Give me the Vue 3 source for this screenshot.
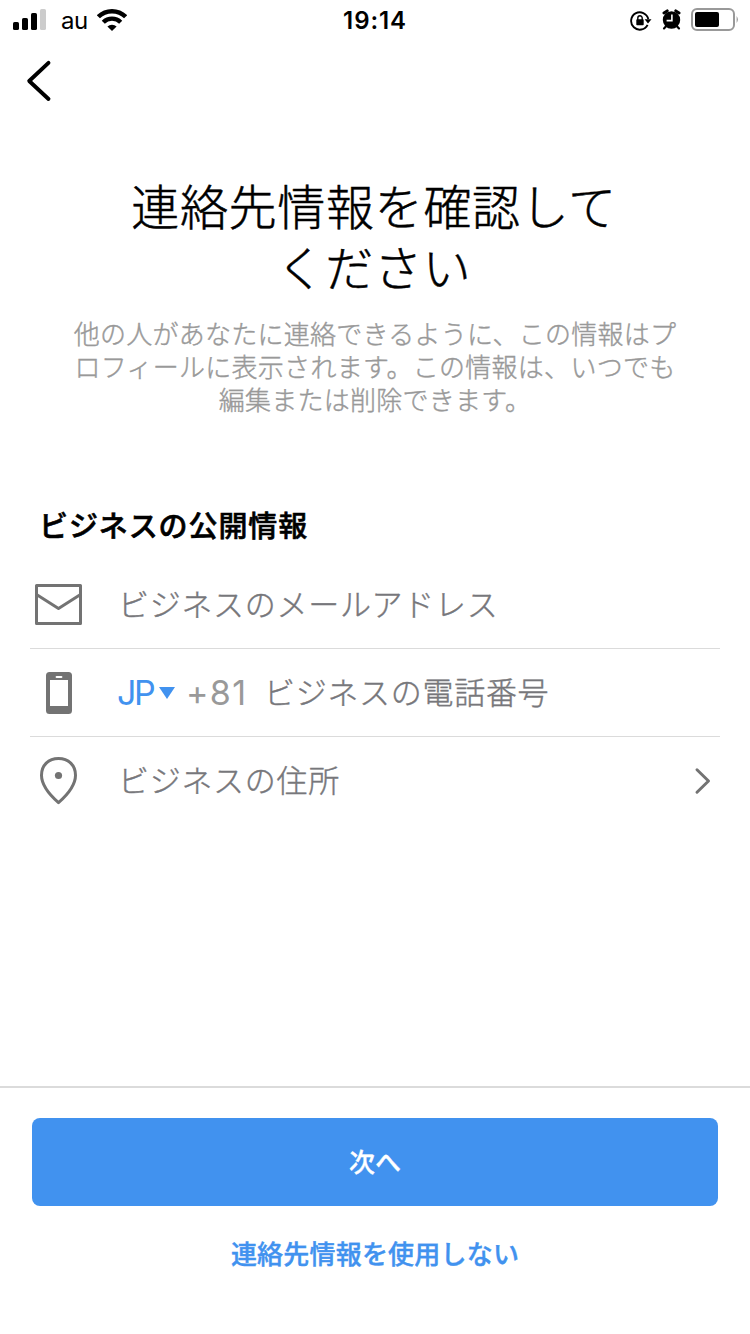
<script setup>
const titleLines = ['連絡先情報を確認して', 'ください']
const leadLines = [
  '他の人があなたに連絡できるように、この情報はプ',
  'ロフィールに表示されます。この情報は、いつでも',
  '編集または削除できます。',
]
</script>

<template>
  <div class="screen">
    <header class="status">
      <div class="status-left">
        <svg class="signal" width="34" height="22" viewBox="0 0 34 22">
          <rect x="0" y="13" width="6" height="8" rx="1.6" />
          <rect x="9" y="9" width="6" height="12" rx="1.6" />
          <rect x="18" y="4" width="6" height="17" rx="1.6" />
          <rect x="27" y="0" width="6" height="21" rx="1.6" fill="#ccc" />
        </svg>
        <span class="carrier">au</span>
        <svg class="wifi" width="30" height="22" viewBox="0 0 30 22">
          <g fill="none" stroke="#000" stroke-width="4.4">
            <path d="M1.4 7.8A19.4 19.4 0 0 1 28.6 7.8" />
            <path d="M6.3 13.2A12.4 12.4 0 0 1 23.7 13.2" />
          </g>
          <path d="M10.4 17.6A6.6 6.6 0 0 1 19.6 17.6L15 22Z" />
        </svg>
      </div>
      <span class="clock">19:14</span>
      <div class="status-right">
        <svg class="lock" width="22" height="22" viewBox="0 0 22 22">
          <path d="M17.6 14.9A8.7 8.7 0 1 1 18.3 9" fill="none" stroke="#000" stroke-width="1.9" />
          <path d="M14.6 9.2H21.5L18 13.6Z" />
          <rect x="6.3" y="9.3" width="7.4" height="5.9" rx=".8" />
          <path d="M7.8 10V8a2.2 2.2 0 0 1 4.4 0v2" fill="none" stroke="#000" stroke-width="1.4" />
        </svg>
        <svg class="alarm" width="20" height="21" viewBox="0 0 20 21">
          <circle cx="9.5" cy="11" r="8.7" />
          <path d="M2 4L5.2 1.9M17 4L13.8 1.9" stroke="#000" stroke-width="3" stroke-linecap="round" />
          <path d="M4.3 17L2 19.4M14.7 17L17 19.4" stroke="#000" stroke-width="2.2" stroke-linecap="round" />
          <path d="M9.9 5.6V11.6H4.6" fill="none" stroke="#fff" stroke-width="1.6" />
        </svg>
        <svg class="battery" width="48" height="24" viewBox="0 0 48 24">
          <rect x="1" y="1" width="42" height="21" rx="5" fill="none" stroke="#999" stroke-width="2" />
          <rect x="4" y="4" width="24" height="15" rx="2" />
          <path d="M45.6 8Q48.2 11.5 45.6 15Z" fill="#999" />
        </svg>
      </div>
    </header>

    <nav class="nav">
      <svg width="26" height="42" viewBox="0 0 26 42">
        <path d="M22.5 2.8L3.2 21L22.5 39" fill="none" stroke="#000" stroke-width="3.9" stroke-linecap="round" stroke-linejoin="round" />
      </svg>
    </nav>

    <main class="content">
      <h1 class="title"><span v-for="line in titleLines" :key="line">{{ line }}</span></h1>
      <p class="lead"><span v-for="line in leadLines" :key="line">{{ line }}</span></p>

      <h2 class="section">ビジネスの公開情報</h2>
      <div class="fields">
        <div class="field">
          <svg class="icon" width="58" height="50" viewBox="0 0 58 50">
            <g fill="none" stroke="#737373" stroke-width="3" stroke-linejoin="round">
              <rect x="6.5" y="5.5" width="44" height="38" />
              <path d="M6.5 14.5L28.5 28.5L50.5 14.5" />
            </g>
          </svg>
          <span class="hint">ビジネスのメールアドレス</span>
        </div>
        <div class="field">
          <svg class="icon" width="58" height="50" viewBox="0 0 58 50">
            <path fill="#737373" fill-rule="evenodd" d="M19.5 4H38.5a3.5 3.5 0 0 1 3.5 3.5V42.5a3.5 3.5 0 0 1-3.5 3.5H19.5a3.5 3.5 0 0 1-3.5-3.5V7.5a3.5 3.5 0 0 1 3.5-3.5ZM20 12V38H38V12ZM26.6 8a.7.7 0 0 0 0 2H31.4a.7.7 0 0 0 0-2Z" />
          </svg>
          <span class="country">JP</span>
          <svg class="caret" width="16" height="12" viewBox="0 0 16 12"><path d="M0 0H16L8 12Z" fill="#4192ef" /></svg>
          <span class="dial">+81</span>
          <span class="hint">ビジネスの電話番号</span>
        </div>
        <div class="field">
          <svg class="icon" width="58" height="50" viewBox="0 0 58 50">
            <path d="M28.5 46.6C21 40 11.5 30 11.5 19.2C11.5 9.3 18.5 2.5 28.5 2.5S45.5 9.3 45.5 19.2C45.5 30 36 40 28.5 46.6Z" fill="none" stroke="#737373" stroke-width="3" stroke-linejoin="round" />
            <circle cx="28.5" cy="19.5" r="3.6" fill="#737373" />
          </svg>
          <span class="hint">ビジネスの住所</span>
          <svg class="chevron" width="18" height="28" viewBox="0 0 18 28">
            <path d="M3 2.8L14.5 14L3 25.2" fill="none" stroke="#737373" stroke-width="3" stroke-linecap="round" stroke-linejoin="round" />
          </svg>
        </div>
      </div>
    </main>

    <footer class="actions">
      <button class="next">次へ</button>
      <a class="skip">連絡先情報を使用しない</a>
    </footer>
  </div>
</template>

<style>
body {
  background: #fff;
}
</style>

<style scoped>
.screen {
  display: flex;
  flex-direction: column;
  width: 750px;
  height: 1334px;
  overflow: hidden;
  background: #fff;
  color: #000;
  font-family: "Noto Sans CJK JP", sans-serif;
}
svg {
  display: block;
  flex: none;
}
.status {
  display: grid;
  grid-template-columns: 1fr auto 1fr;
  height: 40px;
  font-family: Inter, sans-serif;
}
.status-left,
.status-right {
  display: flex;
  align-items: flex-start;
}
.status-left {
  padding-left: 13px;
}
.signal {
  margin-top: 9px;
}
.carrier {
  margin: 6px 0 0 14px;
  width: 36px;
  font-size: 24px;
  line-height: 30px;
  letter-spacing: -0.4px;
}
.wifi {
  margin-top: 9px;
}
.clock {
  padding-top: 6px;
  font-size: 24px;
  font-weight: 600;
  line-height: 30px;
  letter-spacing: 0.9px;
}
.status-right {
  justify-content: flex-end;
  padding-right: 11px;
}
.lock {
  margin: 10px 10px 0 0;
}
.alarm {
  margin: 9px 9px 0 0;
}
.battery {
  margin-top: 8px;
}
.nav {
  height: 80px;
  padding: 20px 0 0 26px;
  box-sizing: border-box;
}
.content {
  flex: 1;
}
.title {
  margin: 54px 0 0;
  font-size: 48px;
  font-weight: 300;
  line-height: 61px;
  letter-spacing: 0.7px;
  text-align: center;
  -webkit-text-stroke: 0.5px currentColor;
}
.title span,
.lead span {
  display: block;
  white-space: nowrap;
}
.title span {
  margin-right: 2px;
}
.lead {
  margin: 20px 0 0;
  color: #999;
  font-size: 26px;
  font-weight: 300;
  line-height: 33px;
  letter-spacing: 0.26px;
  text-align: center;
  -webkit-text-stroke: 0.4px currentColor;
}
.section {
  margin: 89px 0 0 39px;
  font-size: 29px;
  font-weight: 500;
  line-height: 40px;
  letter-spacing: 0.9px;
  -webkit-text-stroke: 0.6px currentColor;
}
.fields {
  margin: 17px 30px 0;
}
.field {
  display: flex;
  align-items: center;
  box-sizing: border-box;
  height: 88px;
  border-bottom: 1px solid #dbdbdb;
}
.field:last-child {
  border-bottom: 0;
}
.icon {
  margin-right: 30px;
}
.hint {
  padding-bottom: 4px;
  color: #77777b;
  font-size: 31px;
  font-weight: 300;
  line-height: 44px;
  letter-spacing: 0.7px;
  -webkit-text-stroke: 0.4px currentColor;
}
.country,
.dial {
  font-family: Inter, sans-serif;
  font-size: 34px;
  line-height: 40px;
}
.country {
  width: 42px;
  margin-left: -1px;
  color: #4192ef;
  letter-spacing: -2.4px;
}
.dial {
  width: 63px;
  margin: 0 15px 0 11px;
  color: #999;
  letter-spacing: 1.3px;
}
.chevron {
  margin: 0 8px 0 auto;
}
.actions {
  display: flex;
  flex-direction: column;
  align-items: center;
  box-sizing: border-box;
  height: 248px;
  padding-top: 30px;
  border-top: 2px solid #dbdbdb;
}
.next {
  width: 686px;
  height: 88px;
  padding: 0 0 2px;
  border: 0;
  border-radius: 8px;
  background: #4192ef;
  color: #fff;
  font: 500 26px/40px "Noto Sans CJK JP", sans-serif;
  -webkit-text-stroke: 0.3px currentColor;
}
.skip {
  margin-top: 27px;
  color: #4192ef;
  font-size: 26px;
  font-weight: 500;
  line-height: 40px;
  letter-spacing: 0.2px;
  -webkit-text-stroke: 0.4px currentColor;
}
</style>
